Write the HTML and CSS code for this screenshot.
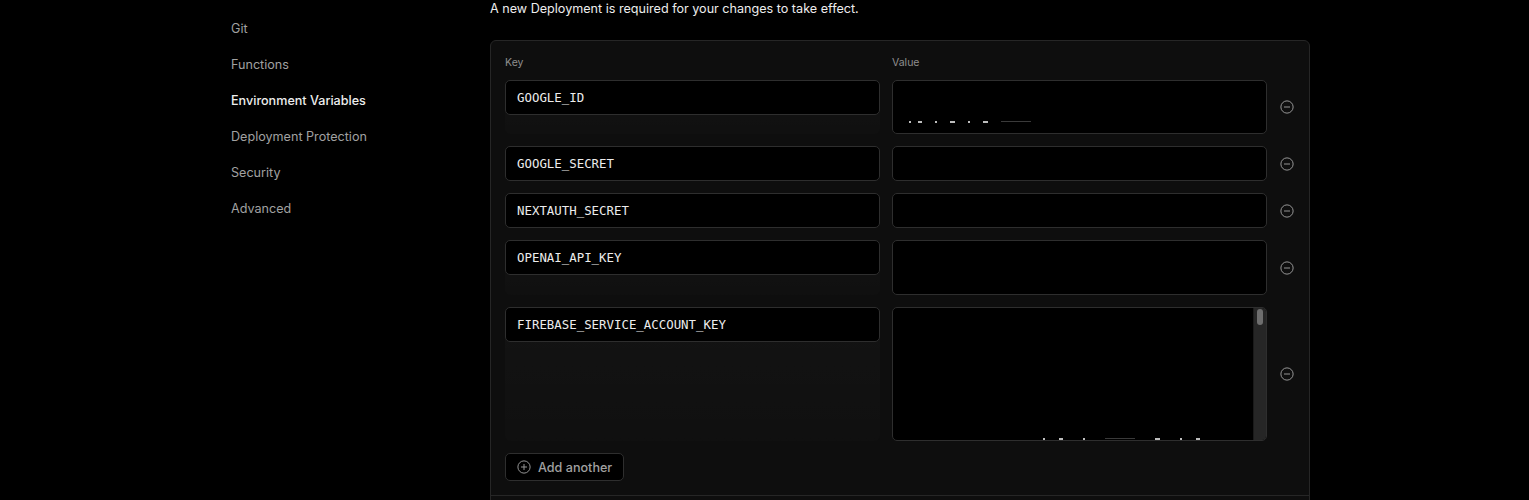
FILE: index.html
```html
<!DOCTYPE html>
<html lang="en">
<head>
<meta charset="utf-8">
<title>Environment Variables</title>
<link rel="stylesheet" href="styles.css">
</head>
<body>
<div class="page">
  <nav class="sidebar">
    <a class="nav-item">Git</a>
    <a class="nav-item">Functions</a>
    <a class="nav-item active">Environment Variables</a>
    <a class="nav-item">Deployment Protection</a>
    <a class="nav-item">Security</a>
    <a class="nav-item">Advanced</a>
  </nav>
  <main class="content">
    <p class="notice">A new Deployment is required for your changes to take effect.</p>
    <section class="card">
      <div class="card-body">
        <div class="grid">
          <div class="label">Key</div>
          <div class="label">Value</div>
          <div></div>

          <div class="key-cell"><div class="input">GOOGLE_ID</div></div>
          <div class="value h54"><span class="dots"><i></i><i class="w2"></i><i></i><i class="w3"></i><i></i><i class="w3"></i><i class="faint"></i></span></div>
          <div class="remove"><svg viewBox="0 0 16 16" width="14" height="14"><circle cx="8" cy="8" r="7" fill="none" stroke="#9a9a9a" stroke-width="1.1"/><path d="M5 8h6" stroke="#9a9a9a" stroke-width="1.1" stroke-linecap="round"/></svg></div>

          <div class="key-cell"><div class="input">GOOGLE_SECRET</div></div>
          <div class="value h35"></div>
          <div class="remove"><svg viewBox="0 0 16 16" width="14" height="14"><circle cx="8" cy="8" r="7" fill="none" stroke="#9a9a9a" stroke-width="1.1"/><path d="M5 8h6" stroke="#9a9a9a" stroke-width="1.1" stroke-linecap="round"/></svg></div>

          <div class="key-cell"><div class="input">NEXTAUTH_SECRET</div></div>
          <div class="value h35"></div>
          <div class="remove"><svg viewBox="0 0 16 16" width="14" height="14"><circle cx="8" cy="8" r="7" fill="none" stroke="#9a9a9a" stroke-width="1.1"/><path d="M5 8h6" stroke="#9a9a9a" stroke-width="1.1" stroke-linecap="round"/></svg></div>

          <div class="key-cell"><div class="input">OPENAI_API_KEY</div></div>
          <div class="value h55"></div>
          <div class="remove"><svg viewBox="0 0 16 16" width="14" height="14"><circle cx="8" cy="8" r="7" fill="none" stroke="#9a9a9a" stroke-width="1.1"/><path d="M5 8h6" stroke="#9a9a9a" stroke-width="1.1" stroke-linecap="round"/></svg></div>

          <div class="key-cell"><div class="input">FIREBASE_SERVICE_ACCOUNT_KEY</div></div>
          <div class="value h134">
            <span class="dots bottom"><i></i><i class="w2"></i><i></i><i class="faint"></i><i class="w3"></i><i></i><i class="w2"></i></span>
            <div class="scrollbar"><div class="thumb"></div></div>
          </div>
          <div class="remove"><svg viewBox="0 0 16 16" width="14" height="14"><circle cx="8" cy="8" r="7" fill="none" stroke="#9a9a9a" stroke-width="1.1"/><path d="M5 8h6" stroke="#9a9a9a" stroke-width="1.1" stroke-linecap="round"/></svg></div>
        </div>
        <button class="add-btn">
          <svg viewBox="0 0 16 16" width="14" height="14"><circle cx="8" cy="8" r="7" fill="none" stroke="#9a9a9a" stroke-width="1.1"/><path d="M5 8h6M8 5v6" stroke="#9a9a9a" stroke-width="1.1" stroke-linecap="round"/></svg>
          <span>Add another</span>
        </button>
      </div>
      <div class="card-footer"></div>
    </section>
  </main>
</div>
</body>
</html>
```
FILE: styles.css
```css
* { box-sizing: border-box; }
html, body {
  margin: 0;
  background: #000;
  height: 100%;
  overflow: hidden;
}
body {
  font-family: Inter, "Noto Sans", Arial, sans-serif;
  color: #ededed;
}
.page {
  display: flex;
  padding-left: 231px;
}
.sidebar {
  width: 259px;
  flex: none;
  display: flex;
  flex-direction: column;
  padding-top: 11px;
}
.nav-item {
  display: block;
  height: 36px;
  line-height: 36px;
  font-size: 12.6px;
  color: #a1a1a1;
}
.nav-item.active {
  color: #ededed;
  font-weight: 500;
}
.content {
  width: 820px;
  flex: none;
}
.notice {
  margin: 0;
  padding-top: 1px;
  font-size: 12.6px;
  line-height: 16px;
  color: #ededed;
}
.card {
  margin-top: 23px;
  background: #0e0e0e;
  border: 1px solid #262626;
  border-radius: 6px;
  height: 480px;
}
.card-body {
  padding: 14px 0 14px 14px;
  border-bottom: 1px solid #262626;
}
.grid {
  display: grid;
  grid-template-columns: 375px 375px 16px;
  column-gap: 12px;
  row-gap: 12px;
}
.label {
  font-size: 10.5px;
  color: #8f8f8f;
  line-height: 14px;
  padding-top: 1px;
  height: 13px;
}
.key-cell {
  background: linear-gradient(rgba(255,255,255,0.022), rgba(255,255,255,0.008));
  border-radius: 6px;
}
.input {
  height: 35px;
  background: #000;
  border: 1px solid #2e2e2e;
  border-radius: 5px;
  padding: 0 11px;
  display: flex;
  align-items: center;
  font-family: "DejaVu Sans Mono", "Liberation Mono", monospace;
  font-size: 12.4px;
  color: #ededed;
}
.value {
  background: #000;
  border: 1px solid #2e2e2e;
  border-radius: 5px;
  position: relative;
  overflow: hidden;
}
.h35 { height: 35px; }
.h54 { height: 54px; }
.h55 { height: 55px; }
.h134 { height: 134px; }
.dots {
  position: absolute;
  left: 16px;
  top: 40px;
  display: flex;
  gap: 13px;
}
.dots i {
  display: block;
  width: 2px;
  height: 2px;
  background: #bdbdbd;
}
.dots i.w2 { width: 4px; margin-left: -6px; }
.dots i.w3 { width: 5px; }
.dots i.faint { width: 30px; height: 1px; background: #3a3a3a; }
.dots.bottom {
  top: auto;
  bottom: 0;
  left: 150px;
  gap: 20px;
}
.scrollbar {
  position: absolute;
  right: 0;
  top: 0;
  bottom: 0;
  width: 13px;
  background: #262626;
  border-left: 1px solid #1a1a1a;
}
.thumb {
  margin: 1px 3px 0 3px;
  height: 16px;
  background: #6e6e6e;
  border-radius: 3px;
}
.remove {
  display: flex;
  align-items: center;
  justify-content: center;
}
.add-btn {
  margin-top: 12px;
  height: 28px;
  width: 119px;
  background: #000;
  border: 1px solid #2e2e2e;
  border-radius: 5px;
  display: flex;
  align-items: center;
  gap: 7px;
  padding: 0 0 0 11px;
  font-family: Inter, "Noto Sans", Arial, sans-serif;
  font-size: 12.6px;
  font-weight: 500;
  color: #a1a1a1;
}
.add-btn svg { flex: none; }
```
